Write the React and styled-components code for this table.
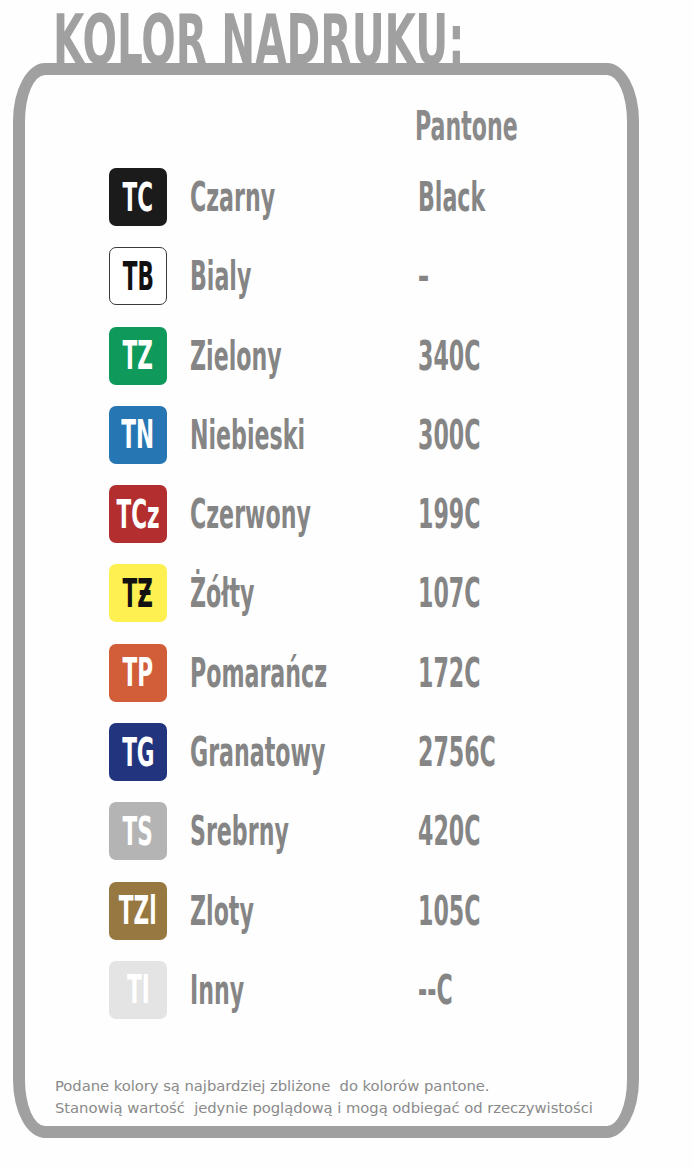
import React from "react";
import styled, { createGlobalStyle } from "styled-components";

const Global = createGlobalStyle`
  html, body { margin: 0; padding: 0; background: #ffffff; }
  body { width: 694px; height: 1170px; overflow: hidden; }
`;

const COND = `"DejaVu Sans Condensed", "DejaVu Sans", sans-serif`;

const Page = styled.div`
  width: 694px;
  height: 1170px;
  background: #fefefe;
  font-family: ${COND};
`;

const Title = styled.h1`
  margin: 0;
  padding: 10px 0 0 53px;
  height: 63px;
  box-sizing: border-box;
  font-size: 70px;
  line-height: 60px;
  font-weight: 700;
  font-stretch: condensed;
  color: #a0a0a0;
  white-space: nowrap;
  position: relative;
  z-index: 1;
`;

const Squeeze = styled.span`
  display: inline-block;
  transform: scaleX(${(p) => p.$s || 0.615});
  transform-origin: ${(p) => p.$o || "left"} center;
  white-space: nowrap;
`;

const Frame = styled.div`
  margin-left: 13px;
  width: 626px;
  height: 1075px;
  box-sizing: border-box;
  border: 12px solid #a0a0a0;
  border-radius: 32px / 58px;
  display: flex;
  flex-direction: column;
  padding: 31px 0 0 84px;
`;

const Header = styled.div`
  margin-left: 306px;
  height: 40px;
  line-height: 40px;
  font-size: 40px;
  font-weight: 700;
  font-stretch: condensed;
  color: #8a8a8a;
`;

const List = styled.div`
  margin-top: 22px;
  display: flex;
  flex-direction: column;
  gap: 21.3px;
`;

const Row = styled.div`
  display: flex;
  align-items: center;
  height: 58px;
`;

const Badge = styled.div`
  width: 58px;
  height: 58px;
  flex: 0 0 58px;
  box-sizing: border-box;
  border-radius: 7px;
  background: ${(p) => p.$bg};
  color: ${(p) => p.$fg};
  border: ${(p) => (p.$outline ? "1px solid #3a3a3a" : "none")};
  display: flex;
  align-items: center;
  justify-content: center;
  font-size: 39px;
  line-height: 1;
  font-weight: 700;
  font-stretch: condensed;
`;

const Name = styled.div`
  margin-left: 23px;
  width: 228px;
  font-size: 40px;
  line-height: 40px;
  font-weight: 700;
  font-stretch: condensed;
  color: #858585;
`;

const Value = styled.div`
  font-size: 40px;
  line-height: 40px;
  font-weight: 700;
  font-stretch: condensed;
  color: #858585;
`;

const Footer = styled.div`
  margin-top: auto;
  margin-bottom: 7px;
  margin-left: -54px;
  font-family: "DejaVu Sans", sans-serif;
  font-size: 14.8px;
  letter-spacing: -0.05px;
  line-height: 22px;
  color: #8a8a8a;
  white-space: pre;
`;

const colors = [
  { code: "TC", name: "Czarny", pantone: "Black", bg: "#1b1b1b", fg: "#ffffff" },
  { code: "TB", name: "Bialy", pantone: "–", bg: "#ffffff", fg: "#111111", outline: true },
  { code: "TZ", name: "Zielony", pantone: "340C", bg: "#0f9a5c", fg: "#ffffff" },
  { code: "TN", name: "Niebieski", pantone: "300C", bg: "#2776b4", fg: "#ffffff" },
  { code: "TCz", name: "Czerwony", pantone: "199C", bg: "#b32f2f", fg: "#ffffff" },
  { code: "TƵ", name: "Żółty", pantone: "107C", bg: "#fdf050", fg: "#111111" },
  { code: "TP", name: "Pomarańcz", pantone: "172C", bg: "#d15e38", fg: "#ffffff" },
  { code: "TG", name: "Granatowy", pantone: "2756C", bg: "#22347e", fg: "#ffffff" },
  { code: "TS", name: "Srebrny", pantone: "420C", bg: "#b4b4b4", fg: "#ffffff" },
  { code: "TZl", name: "Zloty", pantone: "105C", bg: "#977840", fg: "#ffffff" },
  { code: "TI", name: "Inny", pantone: "--C", bg: "#e4e4e4", fg: "#ffffff" },
];

export default function App() {
  return (
    <Page>
      <Global />
      <Title>
        <Squeeze $s={0.645}>KOLOR NADRUKU:</Squeeze>
      </Title>
      <Frame>
        <Header>
          <Squeeze>Pantone</Squeeze>
        </Header>
        <List>
          {colors.map((c) => (
            <Row key={c.code}>
              <Badge $bg={c.bg} $fg={c.fg} $outline={c.outline}>
                <Squeeze $o="center">{c.code}</Squeeze>
              </Badge>
              <Name>
                <Squeeze>{c.name}</Squeeze>
              </Name>
              <Value>
                <Squeeze>{c.pantone}</Squeeze>
              </Value>
            </Row>
          ))}
        </List>
        <Footer>
          {"Podane kolory są najbardziej zbliżone  do kolorów pantone.\nStanowią wartość  jedynie poglądową i mogą odbiegać od rzeczywistości"}
        </Footer>
      </Frame>
    </Page>
  );
}
